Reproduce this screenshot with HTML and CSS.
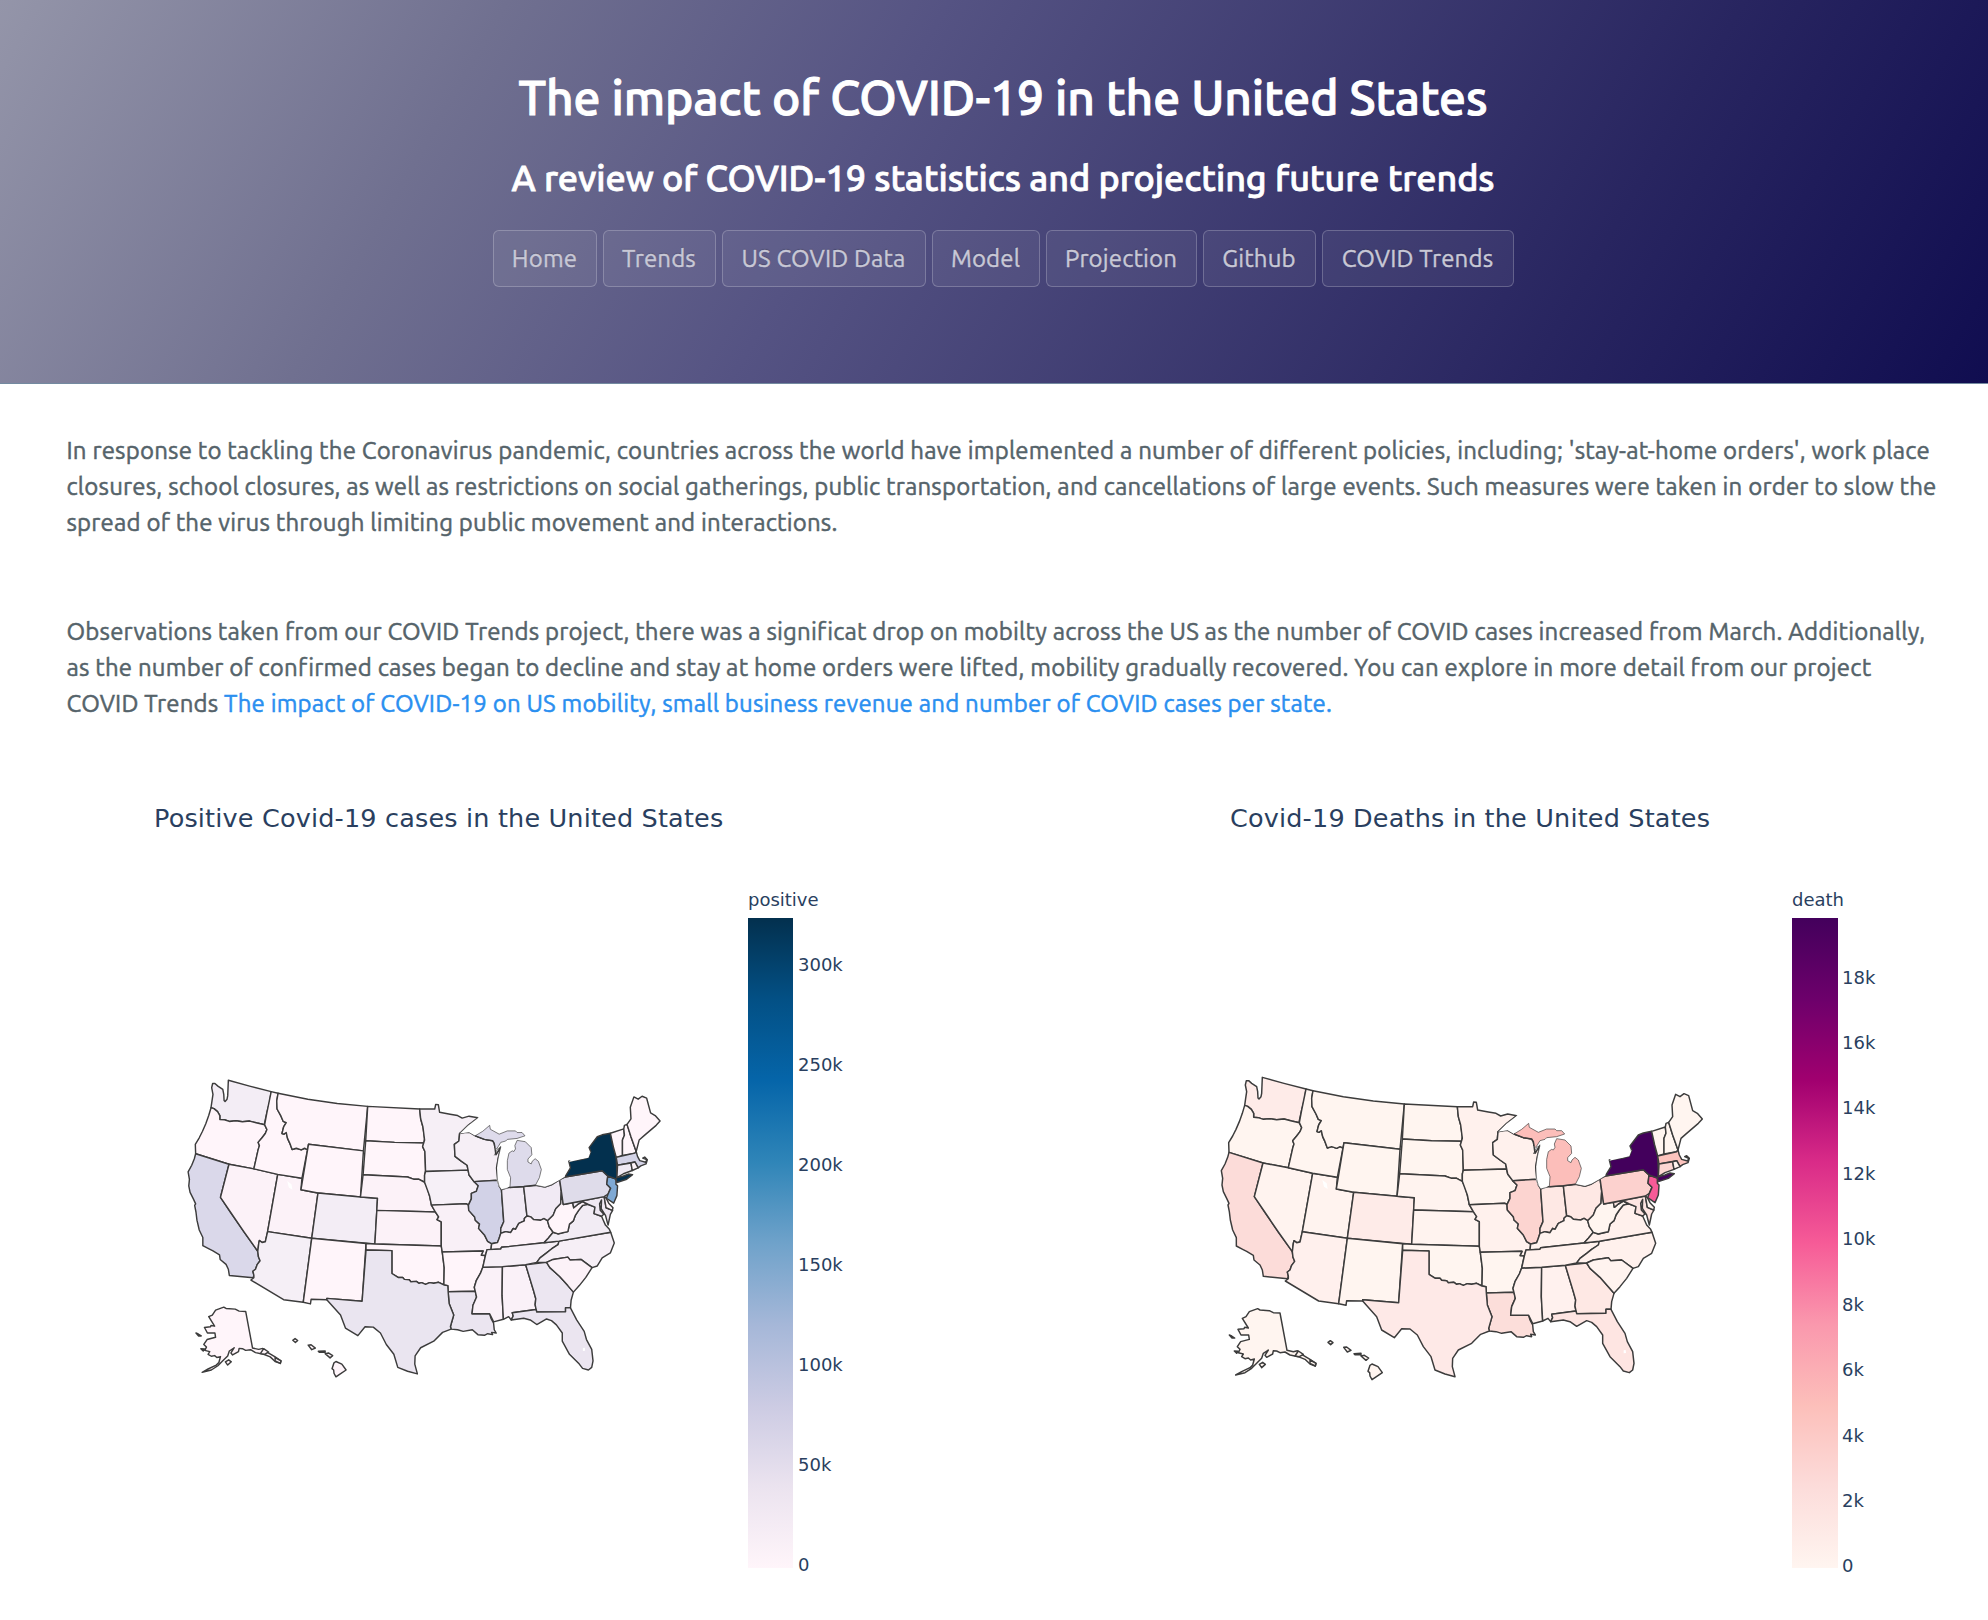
FILE: index.html
```html
<!DOCTYPE html>
<html lang="en">
<head>
<meta charset="utf-8">
<title>The impact of COVID-19 in the United States</title>
<link rel="stylesheet" href="styles.css">
</head>
<body>
<svg class="defs" width="0" height="0">
<symbol id="us-map" viewBox="0 0 1500 960">
<g class="states">
<path style="fill:var(--wa)" d="M157 22L222 40 288 57 283 90 275 120 268 152V158L245 153 222 147 200 149 180 146 160 148 145 143 131 142V130L124 118 113 109 104 106 107 85 110 65 106 45 109 32 116 32 125 40 140 50 143 65 144 84 147 87 153 80 155 70Z"/>
<path style="fill:var(--low)" d="M104 106L113 109 124 118 131 130V142L145 143 160 148 180 146 200 149 222 147 245 153 268 158 275 173 270 185 260 198 248 212 252 222 248 235 235 293 159 279 57 247 56 218 68 198 78 178 88 155 97 130Z"/>
<path style="fill:var(--ca)" d="M57 247L159 279 133 380 165 428 205 486 247 545 249 562 254 574 245 586 240 600 232 606 235 618 233 626 160 619 157 600 150 585 132 570 130 556 110 544 98 538 79 528V503L68 480 61 450 58 425 54 405 57 400 50 385 40 365 36 345 38 325 34 302 45 282 53 262Z"/>
<path style="fill:var(--light)" d="M159 279L235 293 308 310 277 485 270 516 260 518 252 512 250 520 247 545 205 486 133 380Z"/>
<path style="fill:var(--light)" d="M308 310L382 322 379 357 431 367 412 505 277 485Z"/>
<path style="fill:var(--low)" d="M288 57L309 62 305 85 306 110 318 132 325 148 334 152 326 165 321 185 327 187 334 182 338 200 345 215 352 234 365 230 380 235 390 230 399 234 382 322 308 310 235 293 248 235 252 222 248 212 260 198 270 185 275 173 268 158 275 120Z"/>
<path style="fill:var(--low)" d="M309 62L400 80 490 93 583 102 570 238 402 218 399 234 390 230 380 235 365 230 352 234 345 215 338 200 334 182 327 187 321 185 326 165 334 152 325 148 318 132 306 110 305 85Z"/>
<path style="fill:var(--low)" d="M402 218L570 238 561 379 431 367 379 357Z"/>
<path style="fill:var(--co)" d="M431 367L561 379 613 383 605 523 412 505Z"/>
<path style="fill:var(--az)" d="M277 485L412 505 386 701 326 693 226 633 235 626V618L232 606 240 600 245 586 254 574 249 562 247 545 250 520 252 512 260 518 270 516Z"/>
<path style="fill:var(--low)" d="M412 505L578 521 566 698 458 689 459 693 410 692 408 706 386 701Z"/>
<path style="fill:var(--low)" d="M583 102L742 110 745 140 752 165 757 200 755 214 665 212 577 207Z"/>
<path style="fill:var(--low)" d="M577 207L665 212 755 214 751 225 758 240 760 299 757 312V334L740 325 725 325 705 318 569 311Z"/>
<path style="fill:var(--light)" d="M569 311L705 318 725 325 740 325 757 334 765 350 772 375 778 404 790 425 611 420 613 383 561 379Z"/>
<path style="fill:var(--light)" d="M611 420L790 425 800 440 795 448 808 455V529L605 523Z"/>
<path style="fill:var(--low)" d="M578 521L605 523 808 529 811 547 817 595 816 648 800 640 785 643 772 641 760 646 748 641 740 643 732 637 715 638 710 632 695 631 690 625 676 625 657 613V543L578 541Z"/>
<path style="fill:var(--mn)" d="M742 110H788L791 96 799 97 803 120 835 126 858 130 872 138 893 132 920 137 890 160 864 185 862 208 848 218 850 255 870 270 887 282 890 297 760 301 758 240 751 225 757 205 752 165 745 140Z"/>
<path style="fill:var(--ia)" d="M760 301L890 297 893 312 908 332 921 345 915 362 900 368V385L891 404 885 400 778 404 772 375 757 334V312Z"/>
<path style="fill:var(--mo)" d="M778 404L885 400 891 404 892 420 910 440 912 450 925 462 922 475 940 495 950 515 962 522 960 540H948L943 558 930 557 936 544 811 547 808 529V455L795 448 800 440 790 425Z"/>
<path style="fill:var(--low)" d="M811 547L936 544 930 557 943 558 935 594 928 612 915 635 909 655 912 667 829 669 828 650 816 648 817 595Z"/>
<path style="fill:var(--la)" d="M829 669L912 667 916 685 905 710 902 736H956L960 750 968 765 970 785 976 795 962 793 965 800 950 797 940 802 920 800 903 785 875 790 858 785 838 783 836 775 846 740 832 705Z"/>
<path style="fill:var(--tx)" d="M578 541L657 543V613L676 625 690 625 695 631 710 632 715 638 732 637 740 643 748 641 760 646 772 641 785 643 800 640 816 648 828 650 829 669 832 705 846 740 836 775 838 783 812 793 785 820 745 840 728 865 727 890 735 920 705 912 675 900 663 860 640 830 622 795 600 777 575 776 553 803 515 780 500 740 458 693V689L566 698Z"/>
<path style="fill:var(--al)" d="M935 594L995 592 994 680 998 753 968 761 956 736H902L905 710 916 685 909 655 915 635 928 612Z"/>
<path style="fill:var(--al)" d="M995 592L1066 586 1090 665 1097 690 1095 708 1098 723 1025 733 1028 743 1022 755 1014 745 998 753 994 680Z"/>
<path style="fill:var(--ga)" d="M1066 586L1130 579 1140 595 1170 622 1195 650 1212 670 1205 695 1203 718H1188V730L1100 731 1098 723 1095 708 1097 690 1090 665Z"/>
<path style="fill:var(--fl)" d="M1025 733L1098 723 1100 731 1188 730V718H1203L1222 755 1245 790 1252 815 1268 845 1272 880 1268 900 1258 908 1240 903 1230 890 1200 860 1178 820 1178 795 1160 770 1145 757 1130 752 1100 769 1080 755 1060 750 1022 755 1028 743Z"/>
<path style="fill:var(--mn)" d="M864 185L880 182 893 181 912 192 940 203 965 207 970 215 972 228 975 250 990 226 982 260 977 290 980 328 908 332 893 312 890 297 887 282 870 270 850 255 848 218 862 208Z"/>
<path style="fill:var(--il)" d="M908 332L980 328 985 345 992 357 995 400 999 455 990 475 990 490 985 505 980 518 962 522 950 515 940 495 922 475 925 462 912 450 910 440 892 420 891 404 900 385V368L915 362 921 345Z"/>
<path style="fill:var(--in)" d="M992 357L1010 350 1060 347 1070 437 1062 445 1062 452 1045 460 1035 478 1028 475 1020 488 1005 485 990 490V475L999 455Z"/>
<path style="fill:var(--in)" d="M1060 347L1096 343 1125 349 1145 342 1170 326 1175 365 1173 400 1158 415 1150 435 1133 452 1122 445 1112 450 1090 448 1082 440 1070 437Z"/>
<path style="fill:var(--light)" d="M962 522L980 518 985 505 990 490 1005 485 1020 488 1028 475 1035 478 1045 460 1062 452 1062 445 1070 437 1082 440 1090 448 1112 450 1122 445 1133 452 1138 470 1150 487 1135 505 1122 519 992 533 990 538 960 540Z"/>
<path style="fill:var(--mn)" d="M948 540L990 538 992 533 1122 519 1168 514 1165 525 1145 538 1130 550 1110 565 1100 579 1066 586 995 592 935 594 943 558Z"/>
<path style="fill:var(--mn)" d="M1168 514L1326 487 1337 520 1325 550 1300 565 1285 590 1269 595 1235 570 1202 572 1195 563 1150 570 1130 579 1100 579 1110 565 1130 550 1145 538 1165 525Z"/>
<path style="fill:var(--light)" d="M1130 579L1150 570 1195 563 1202 572 1235 570 1269 595 1250 625 1230 650 1212 670 1195 650 1170 622 1140 595Z"/>
<path style="fill:var(--va)" d="M1122 519L1135 505 1150 487 1165 492 1195 485 1200 462 1212 452 1218 435 1228 420 1240 405 1250 400 1258 402 1278 410 1275 430 1298 438 1310 465 1322 478 1326 487 1168 514Z"/>
<path style="fill:var(--low)" d="M1175 365L1181 402 1210 397 1213 412 1225 402 1240 393 1255 402 1240 405 1228 420 1218 435 1212 452 1200 462 1195 485 1180 488 1165 492 1150 487 1138 470 1133 452 1150 435 1158 415 1173 400Z"/>
<path style="fill:var(--md)" d="M1210 397L1306 378 1312 412 1332 420 1325 432 1318 465 1310 435 1297 415 1298 388 1292 400 1294 420 1305 432 1298 438 1275 430 1278 410 1258 402 1240 393 1225 402 1213 412Z"/>
<path style="fill:var(--low)" d="M1306 378L1312 382 1320 398 1333 412 1331 420 1312 412Z"/>
<path style="fill:var(--pa)" d="M1170 326L1186 318 1300 299 1317 315 1314 340 1326 352 1318 370 1306 378 1181 402Z"/>
<path style="fill:var(--nj)" d="M1317 315L1342 324V340L1347 345 1345 375 1335 398 1313 383 1318 370 1326 352 1314 340Z"/>
<path style="fill:var(--ny)" d="M1186 318L1203 290 1198 270 1240 264 1258 258 1265 240 1260 228 1285 195 1300 189 1325 184 1334 225 1343 258 1345 300V320L1365 315 1380 309 1393 311 1375 325 1345 335 1342 324 1317 315 1300 299Z"/>
<path style="fill:var(--low)" d="M1325 184L1366 171 1368 190 1362 205V252L1343 258 1334 225Z"/>
<path style="fill:var(--low)" d="M1366 171L1368 160 1376 157 1388 195 1404 240 1400 245 1362 252V205L1368 190Z"/>
<path style="fill:var(--low)" d="M1376 157L1388 140 1386 105 1397 73 1410 80 1422 71 1436 77 1448 122 1462 130 1477 147 1465 160 1430 190 1413 205 1404 240 1388 195Z"/>
<path style="fill:var(--ma)" d="M1343 258L1400 245 1404 240 1408 255 1415 268 1433 273 1436 265 1424 260 1430 257 1438 265 1434 278 1418 284 1410 290 1400 272 1347 282Z"/>
<path style="fill:var(--ct)" d="M1347 282L1388 275 1392 298 1365 308 1345 320Z"/>
<path style="fill:var(--low)" d="M1388 275L1400 272 1410 290 1392 298Z"/>
<path style="fill:var(--low)" d="M143 716L150 720 178 722 190 728 210 729 231 841 250 845 262 842 270 850 300 868 318 880 316 888 300 882 285 868 265 860 240 855 225 846 210 848 200 843 190 842 188 852 170 862 165 856 175 840 160 850 155 865 140 880 125 895 105 908 77 915 95 905 120 893 128 885 133 867 122 870 115 864 105 866 95 860 100 852 85 848 90 838 82 830 92 815 118 808 116 795 93 795 84 778 102 776 104 772 115 774 97 745 108 740 118 725Z"/>
<path style="fill:var(--low)" d="M148 883L158 877 166 883 155 893ZM58 795L65 798 74 804 66 804ZM73 843L84 844 80 850ZM255 858L265 843 280 853 268 860ZM300 870L318 880 316 888 300 880Z"/>
<path style="fill:var(--low)" d="M354 817L361 812 369 818 362 824ZM401 832L410 831 423 841 412 846ZM432 851L453 850 453 854 435 854ZM453 858L463 856 476 864 468 871ZM480 886L486 882 504 890 517 908 496 922 486 929 480 918 479 908 474 904Z"/>
</g>
<g class="lakes">
<path d="M864 185L890 160 920 137 950 127 1000 141 1035 157 1064 184 1060 189 1035 177 1010 177 985 187 958 172 956 160 935 178 912 192 893 181Z"/>
<path d="M990 226L1010 203 1038 200 1040 206 1033 232 1025 238 1012 255 1010 285 1020 320 1018 345 1007 355 992 357 982 343 977 325 979 280 983 255Z"/>
<path d="M1040 200L1070 196 1102 215 1115 275 1135 303 1128 315 1160 325 1170 320 1186 310V318L1170 328 1145 342 1125 349 1096 343 1108 320 1114 295 1085 250 1083 228 1065 210Z"/>
<path d="M1198 272L1210 258 1250 249 1265 240 1258 259 1235 264Z"/>
</g>
<g class="shore">
<path style="fill:var(--mi)" d="M912 192L935 178 956 160 958 172 985 187 1010 177 1035 177 1040 182 1055 182 1064 192 1040 200 1010 203 1005 208 990 212 982 225 977 232 972 228 970 215 965 207 940 203Z"/>
<path style="fill:var(--mi)" d="M1040 206L1065 210 1083 228 1085 250 1073 263 1073 272 1083 278 1086 270 1095 262 1105 270 1114 295 1108 320 1096 343 1060 347 1018 350 1020 320 1010 295 1010 268 1015 245 1025 238 1030 240 1035 232 1033 222Z"/>
<path class="open" d="M864 185L890 160 920 137M990 226L982 260 977 290 980 328 985 347 992 357 1018 350M1096 343L1125 349 1145 342 1170 328 1186 318M970 252L980 232 988 228 976 250"/>
</g>
<path class="border" d="M912 192L940 203 965 207 970 215 972 228M1018 350L1060 347 1096 343"/>
<path class="lake-spot" d="M337 330L350 340 353 357 342 350ZM1241 841L1247 840 1248 849 1241 850Z"/>
</symbol>
</svg>

<header class="hero">
<h1>The impact of COVID-19 in the United States</h1>
<h2>A review of COVID-19 statistics and projecting future trends</h2>
<nav class="nav">
<a class="w-home">Home</a><a class="w-trends">Trends</a><a class="w-data">US COVID Data</a><a class="w-model">Model</a><a class="w-projection">Projection</a><a class="w-github">Github</a><a class="w-covid">COVID Trends</a>
</nav>
</header>

<main>
<section class="intro">
<p>
<span class="line">In response to tackling the Coronavirus pandemic, countries across the world have implemented a number of different policies, including; 'stay-at-home orders', work place</span>
<span class="line">closures, school closures, as well as restrictions on social gatherings, public transportation, and cancellations of large events. Such measures were taken in order to slow the</span>
<span class="line">spread of the virus through limiting public movement and interactions.</span>
</p>
<p>
<span class="line">Observations taken from our COVID Trends project, there was a significat drop on mobilty across the US as the number of COVID cases increased from March. Additionally,</span>
<span class="line">as the number of confirmed cases began to decline and stay at home orders were lifted, mobility gradually recovered. You can explore in more detail from our project</span>
<span class="line">COVID Trends <a>The impact of COVID-19 on US mobility, small business revenue and number of COVID cases per state.</a></span>
</p>
</section>

<section class="charts">
<article class="chart positive">
<h3>Positive Covid-19 cases in the United States</h3>
<div class="plot">
<svg class="map"><use href="#us-map"/></svg>
<div class="legend">
<div class="legend-title">positive</div>
<div class="scale">
<div class="bar"></div>
<div class="ticks"><span>300k</span><span>250k</span><span>200k</span><span>150k</span><span>100k</span><span>50k</span><span>0</span></div>
</div>
</div>
</div>
</article>
<article class="chart death">
<h3>Covid-19 Deaths in the United States</h3>
<div class="plot">
<svg class="map"><use href="#us-map"/></svg>
<div class="legend">
<div class="legend-title">death</div>
<div class="scale">
<div class="bar"></div>
<div class="ticks"><span>18k</span><span>16k</span><span>14k</span><span>12k</span><span>10k</span><span>8k</span><span>6k</span><span>4k</span><span>2k</span><span>0</span></div>
</div>
</div>
</div>
</article>
</section>
</main>
</body>
</html>
```
FILE: styles.css
```css
* { box-sizing: border-box; }

body {
  margin: 0;
  background: #fff;
  color: #55636a;
  font-family: Ubuntu, "Noto Sans", sans-serif;
  overflow-x: hidden;
}

.defs { display: block; }

.hero {
  display: flex;
  flex-direction: column;
  align-items: center;
  height: 384px;
  padding: 68px 0 0 18px;
  color: #fff;
  background: linear-gradient(120deg, #9495a9 0%, #707090 23%, #555383 43%, #282560 79%, #100d50 100%);
  border-bottom: 1px solid #738aa0;
}

.hero h1,
.hero h2 {
  margin: 0;
  white-space: nowrap;
  font-weight: 500;
}

.hero h1 {
  height: 80px;
  font-size: 48px;
  line-height: 58px;
  letter-spacing: -0.1px;
  -webkit-text-stroke: 1px #fff;
}

.hero h2 {
  height: 82px;
  font-size: 36px;
  line-height: 60px;
  letter-spacing: -0.07px;
  -webkit-text-stroke: 0.8px #fff;
}

.nav { display: flex; gap: 6px; }

.nav a {
  display: flex;
  align-items: center;
  justify-content: center;
  height: 57px;
  border: 1.5px solid rgba(255, 255, 255, 0.22);
  border-radius: 6px;
  background: rgba(255, 255, 255, 0.06);
  color: #c8c8d6;
  font-size: 24px;
  letter-spacing: 0.15px;
  white-space: nowrap;
  text-shadow: 0 -1px 1px rgba(0, 0, 0, 0.2);
  -webkit-text-stroke: 0.4px #c8c8d6;
}

.w-home { width: 104px; }
.w-trends { width: 113px; }
.w-data { width: 204px; }
.w-model { width: 108px; }
.w-projection { width: 151px; }
.w-github { width: 113px; }
.w-covid { width: 192px; }

.intro { padding: 49px 0 5px 66.5px; }

.intro p {
  margin: 0 0 73px;
  font-size: 24px;
  line-height: 36px;
}

.line {
  display: block;
  white-space: nowrap;
  letter-spacing: 0.19px;
  -webkit-text-stroke: 0.5px currentColor;
}

.intro a { color: #2a8ff0; }

.charts {
  display: grid;
  grid-template-columns: 1034px 1fr;
  color: #2a3f5f;
  font-family: Verdana, "DejaVu Sans", sans-serif;
  font-size: 18px;
}

.chart h3 {
  margin: 0;
  height: 68px;
  font-size: 25.5px;
  font-weight: 400;
  line-height: 37px;
  letter-spacing: 0.17px;
  white-space: nowrap;
}

.plot { display: flex; }
.map { flex: none; }

.positive { padding-left: 154px; }
.positive .plot { padding-left: 23px; }
.positive .map { width: 490.6px; height: 314px; margin-top: 204.8px; }
.positive .legend { margin-left: 80.4px; }

.death h3 { padding-left: 196px; }
.death .plot { padding-left: 176px; }
.death .map { width: 500px; height: 320px; margin-top: 202px; }
.death .legend { margin-left: 82px; }

.legend-title {
  padding-top: 20px;
  height: 49.5px;
  line-height: 24px;
}

.scale { display: flex; gap: 4.5px; }
.bar { width: 45.5px; height: 650px; }

.ticks {
  display: flex;
  flex-direction: column;
  justify-content: space-between;
  height: 621px;
  margin-top: 37px;
  line-height: 20px;
}

.death .ticks { margin-top: 50px; height: 609px; }

.positive .bar {
  background: linear-gradient(#03304e, #035085 12.5%, #0565a9 25%, #2f85b8 37.5%, #6fa2ca 50%, #a5b7d8 62.5%, #cccbe3 75%, #ebe3ef 87.5%, #fff5fa);
}

.death .bar {
  background: linear-gradient(#43005c, #6d006b 12.5%, #a1006f 25%, #d92b88 37.5%, #f65b97 50%, #fa98ad 62.5%, #fcbfba 75%, #fcdcda 87.5%, #fff5f0);
}

.states path,
.shore path,
.border {
  stroke: #3c3c3c;
  stroke-width: 4.4;
  stroke-linejoin: round;
}

.shore path { stroke-width: 2; }
.shore .open, .border { fill: none; }
.lakes path, .lake-spot { fill: #fff; }

.positive .map {
  --low: #fff5fa; --light: #fcf2f8; --wa: #f3edf5; --ca: #dad8ea;
  --co: #f3edf5; --az: #f5eff6; --mn: #f6eff6; --ia: #f6f0f7;
  --mo: #f9f0f7; --la: #ebe5f0; --tx: #eae5f0; --al: #faf1f8;
  --ga: #ece6f1; --fl: #ebe5f0; --il: #d2d2e7; --in: #f1eaf4;
  --va: #f2ecf4; --md: #efe8f2; --pa: #dfdcea; --nj: #7fa9d4;
  --ny: #03304e; --ma: #d4d3e7; --ct: #f0eaf4; --mi: #dedbeb;
}

.death .map {
  --low: #fff5f0; --light: #fff3ef; --wa: #feebe8; --ca: #fcdcd9;
  --co: #feebe8; --az: #fff0ed; --mn: #fff1ed; --ia: #fff4ef;
  --mo: #fff1ed; --la: #fcdeda; --tx: #fee9e7; --al: #fff1ee;
  --ga: #fee8e4; --fl: #fee5e2; --il: #fcd4d0; --in: #fee8e4;
  --va: #fff0ec; --md: #fee5e2; --pa: #fcd1ce; --nj: #f65b97;
  --ny: #43005c; --ma: #fcc3bd; --ct: #fcd6d2; --mi: #fcbeba;
}
```
